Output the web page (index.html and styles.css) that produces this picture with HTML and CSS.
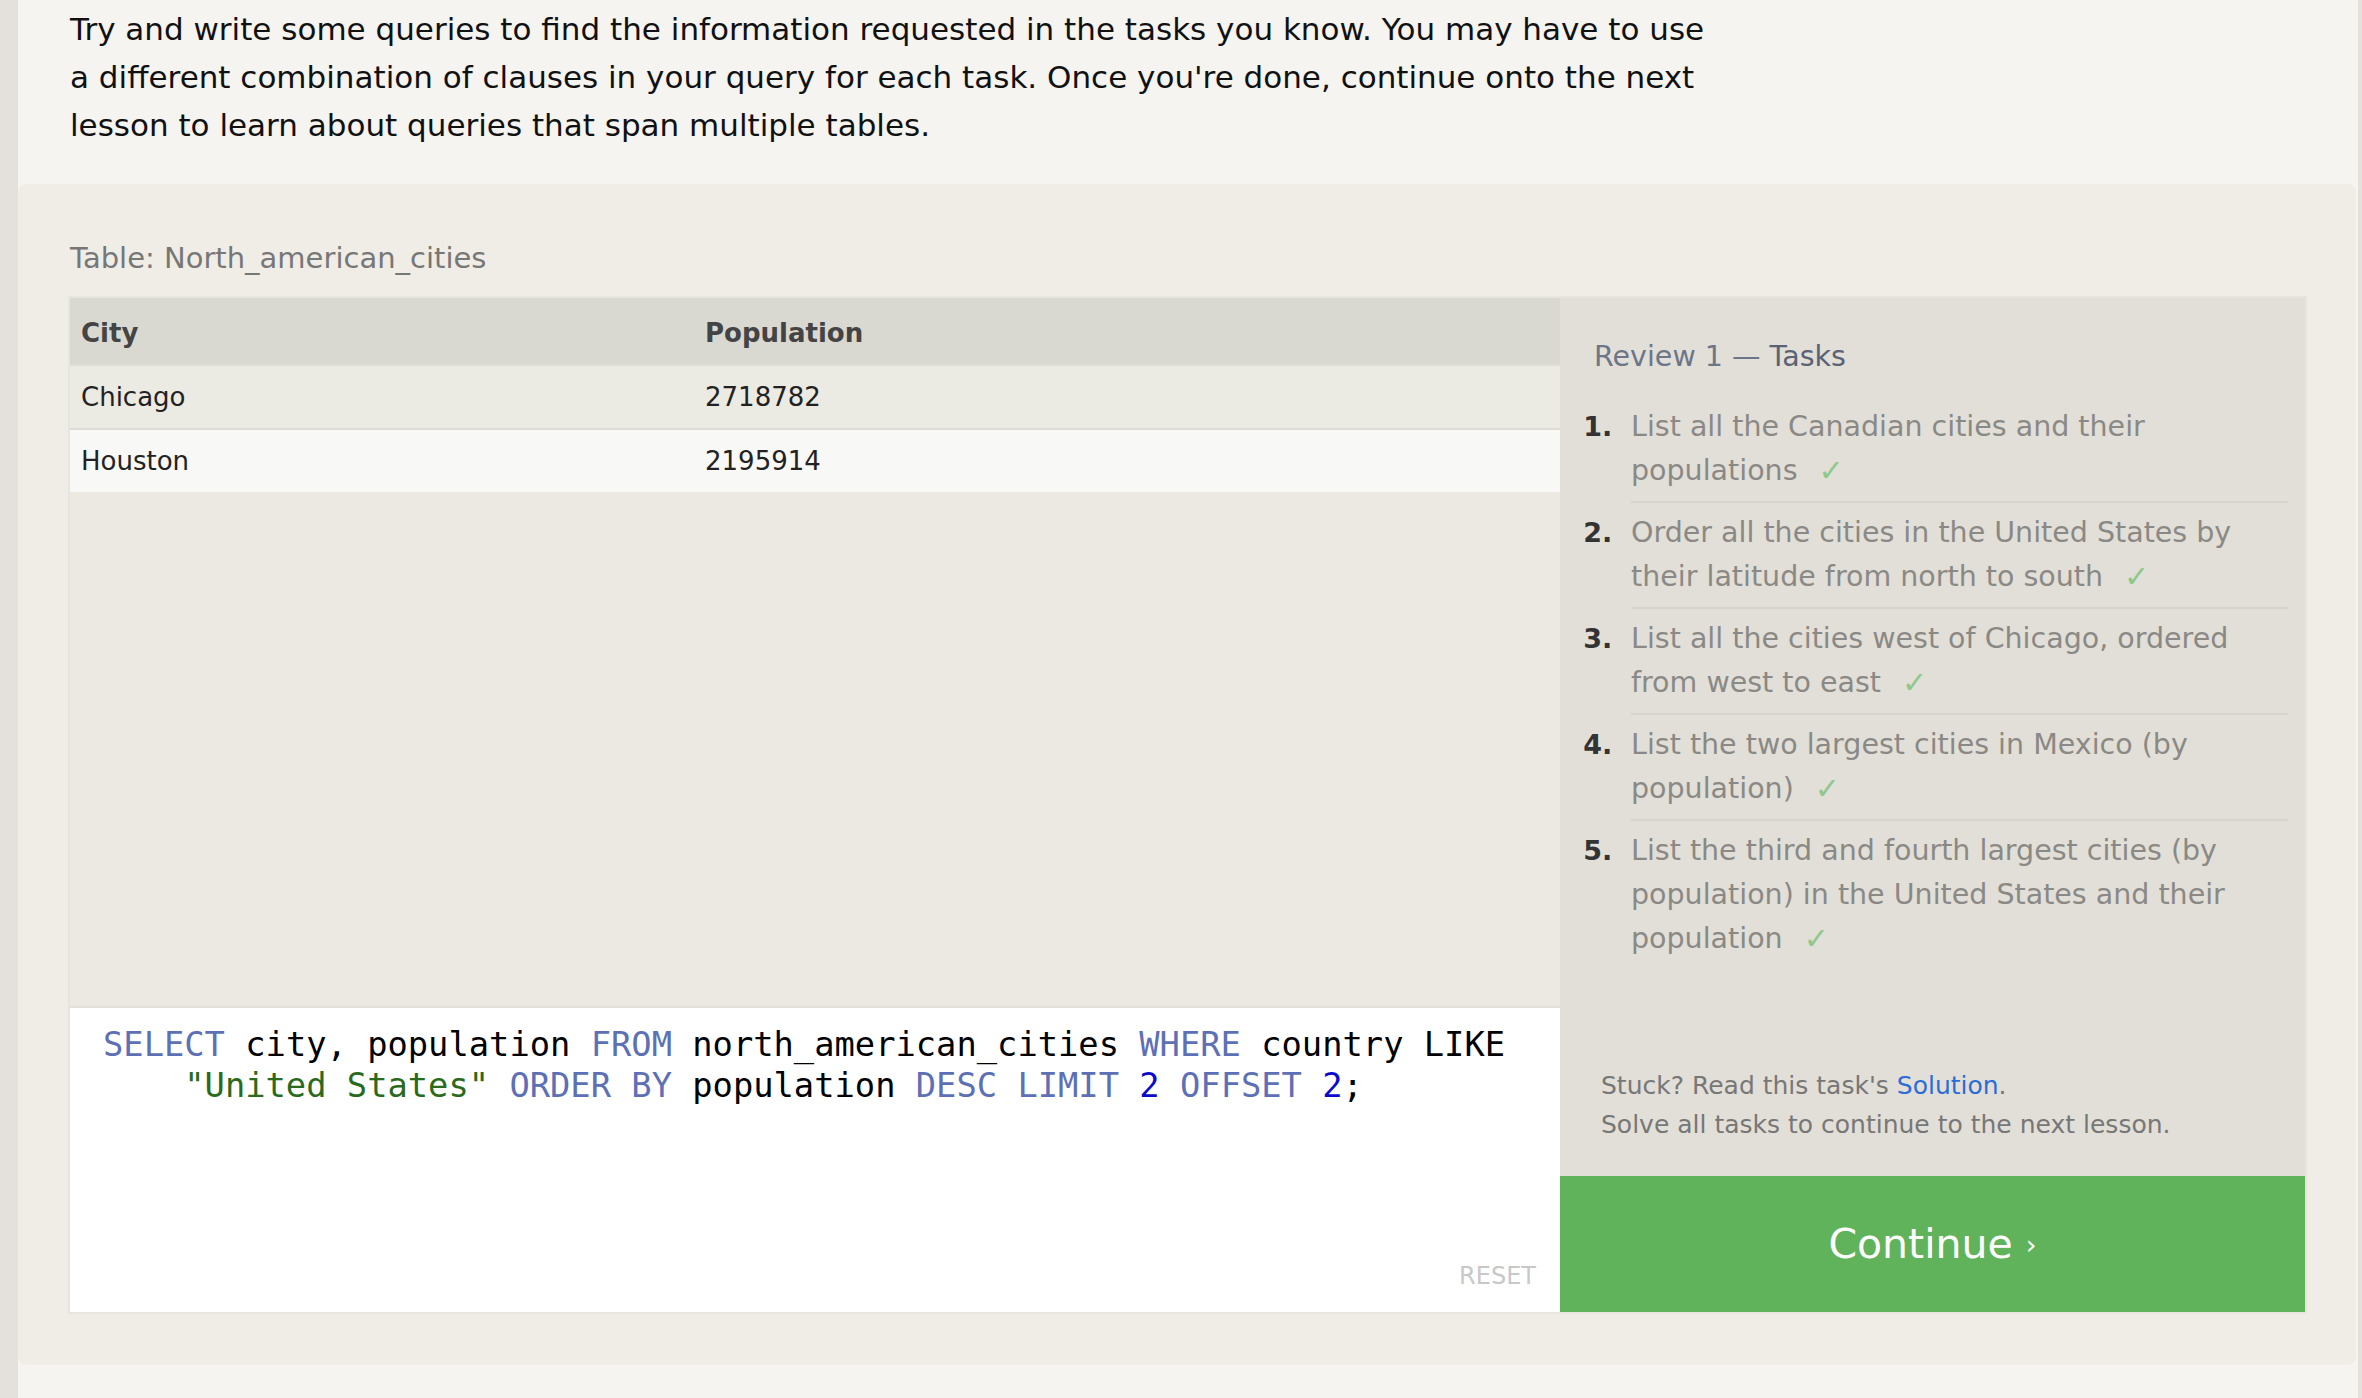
FILE: index.html
```html
<!DOCTYPE html>
<html lang="en">
<head>
<meta charset="utf-8">
<title>SQL Review</title>
<link rel="stylesheet" href="styles.css">
</head>
<body>
<div class="page">
  <p class="intro">Try and write some queries to find the information requested in the tasks you know. You may have to use a different combination of clauses in your query for each task. Once you're done, continue onto the next lesson to learn about queries that span multiple tables.</p>

  <section class="exercise">
    <div class="table-label">Table: North_american_cities</div>
    <div class="workspace">
      <div class="left-col">
        <div class="results">
          <table class="result-table">
            <thead>
              <tr><th class="col-city">City</th><th>Population</th></tr>
            </thead>
            <tbody>
              <tr class="row-odd"><td>Chicago</td><td>2718782</td></tr>
              <tr class="row-even"><td>Houston</td><td>2195914</td></tr>
            </tbody>
          </table>
        </div>
        <div class="editor">
          <pre class="code"><span class="kw">SELECT</span> city, population <span class="kw">FROM</span> north_american_cities <span class="kw">WHERE</span> country LIKE <span class="str">"United States"</span> <span class="kw">ORDER BY</span> population <span class="kw">DESC</span> <span class="kw">LIMIT</span> <span class="num">2</span> <span class="kw">OFFSET</span> <span class="num">2</span>;</pre>
          <div class="reset">RESET</div>
        </div>
      </div>
      <div class="right-col">
        <div class="tasks">
          <h3 class="tasks-title">Review 1 — <span class="tasks-word">Tasks</span></h3>
          <ol class="task-list">
            <li>List all the Canadian cities and their populations <span class="check">✓</span></li>
            <li>Order all the cities in the United States by their latitude from north to south <span class="check">✓</span></li>
            <li>List all the cities west of Chicago, ordered from west to east <span class="check">✓</span></li>
            <li>List the two largest cities in Mexico (by population) <span class="check">✓</span></li>
            <li>List the third and fourth largest cities (by population) in the United States and their population <span class="check">✓</span></li>
          </ol>
          <div class="stuck">
            <div>Stuck? Read this task's <a class="solution" href="#">Solution</a>.</div>
            <div>Solve all tasks to continue to the next lesson.</div>
          </div>
        </div>
        <button class="continue">Continue <span class="arrow">›</span></button>
      </div>
    </div>
  </section>
</div>
</body>
</html>
```

FILE: styles.css
```css
html, body {
  margin: 0;
  padding: 0;
}

body {
  background: #e4e1dd;
  font-family: "DejaVu Sans", "Liberation Sans", sans-serif;
  color: #111;
}

.page {
  margin: 0 4px 0 18px;
  background: #f5f4f0;
  min-height: 1398px;
  padding-top: 5px;
  box-sizing: border-box;
}

.intro {
  margin: 0 0 35px 52px;
  width: 1648px;
  font-size: 31px;
  line-height: 48px;
  color: #111;
}

.exercise {
  margin-right: 2px;
  background: #efede6;
  border-radius: 8px;
  padding: 52px 51px 53px 52px;
}

.table-label {
  font-size: 29px;
  line-height: 44px;
  color: #777;
  margin-bottom: 18px;
}

.workspace {
  display: flex;
  height: 1014px;
  box-shadow: 0 0 0 2px #e7e5df;
}

.left-col {
  width: 1490px;
  display: flex;
  flex-direction: column;
  background: #ebe9e2;
}

.results {
  flex: 1;
}

.result-table {
  width: 100%;
  border-collapse: collapse;
  font-size: 26px;
}

.result-table th {
  background: #dad9d1;
  color: #444;
  font-weight: bold;
  text-align: left;
  height: 67px;
  padding: 3px 11px 0;
  box-sizing: border-box;
}

.result-table .col-city {
  width: 624px;
}

.result-table td {
  height: 62px;
  padding: 0 11px;
  border-top: 2px solid #dddcd5;
  color: #222;
}

.row-odd {
  background: #ebeae3;
}

.row-even {
  background: #f8f8f7;
}

.editor {
  height: 306px;
  box-sizing: border-box;
  background: #fff;
  border-top: 2px solid #e2e0d9;
  padding: 16px 24px 16px 33px;
  display: flex;
  flex-direction: column;
}

.code {
  margin: 0;
  font-family: "DejaVu Sans Mono", "Liberation Mono", monospace;
  font-size: 33.75px;
  line-height: 41px;
  color: #000;
  white-space: pre-wrap;
  padding-left: 4ch;
  text-indent: -4ch;
}

.kw {
  color: #5d70b6;
}

.str {
  color: #2a6a1c;
}

.num {
  color: #0a0acc;
}

.reset {
  margin-top: auto;
  align-self: flex-end;
  font-size: 24px;
  line-height: 40px;
  color: #c8c8c8;
}

.right-col {
  flex: 1;
  display: flex;
  flex-direction: column;
}

.tasks {
  flex: 1;
  background: #e2dfd8;
  display: flex;
  flex-direction: column;
  padding: 37px 17px 32px 34px;
}

.tasks-title {
  margin: 0;
  font-size: 28.5px;
  line-height: 44px;
  font-weight: normal;
  color: #6d7588;
}

.tasks-word {
  color: #5a6275;
}

.task-list {
  margin: 18px 0 0;
  padding-left: 37px;
}

.task-list li {
  padding: 8px 0;
  border-bottom: 2px solid #d7d4cb;
  font-size: 28.5px;
  line-height: 44px;
  color: #8a8985;
}

.task-list li:last-child {
  border-bottom: none;
}

.task-list li::marker {
  content: counter(list-item) ".\00a0\00a0";
  color: #333;
  font-weight: bold;
  font-size: 27px;
}

.check {
  color: #8ec98a;
  margin-left: 12px;
  font-size: 30px;
  line-height: 44px;
  vertical-align: top;
}

.stuck {
  margin-top: auto;
  padding-left: 7px;
  font-size: 25px;
  line-height: 39px;
  color: #777;
}

.solution {
  color: #2b6cd6;
  text-decoration: none;
}

.continue {
  height: 136px;
  border: none;
  background: #61b35b;
  color: #fff;
  font-family: inherit;
  font-size: 41px;
  padding: 0;
  cursor: pointer;
}

.continue .arrow {
  font-size: 27px;
  vertical-align: 4px;
}
```
